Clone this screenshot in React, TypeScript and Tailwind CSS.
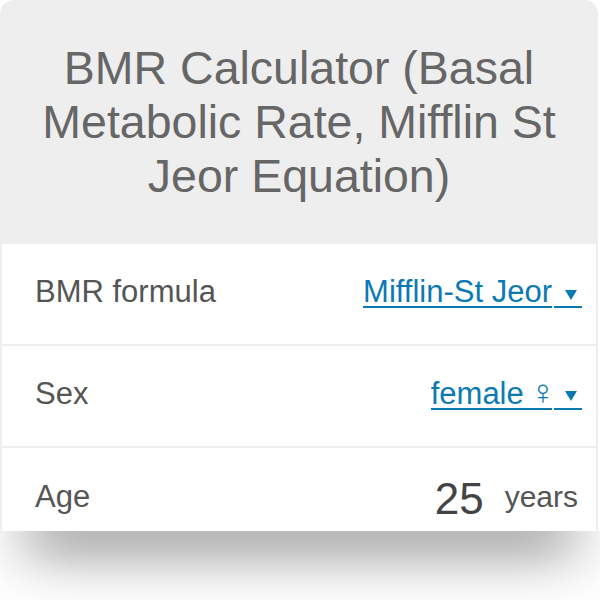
import React from "react";

function Arrow() {
  return (
    <svg width="12" height="10" viewBox="0 0 12 10" className="block">
      <polygon points="0,0 12,0 6,10" fill="#0b7ab4" />
    </svg>
  );
}

function SelectLink({ children }: { children: React.ReactNode }) {
  return (
    <div className="flex text-[#0b7ab4]">
      <span className="border-b-2 border-[#0b7ab4] leading-[28px] whitespace-nowrap flex items-baseline">{children}</span>
      <span className="ml-[2px] border-b-2 border-[#0b7ab4] flex items-center pl-[11px] pr-[5px] pt-[5px]">
        <Arrow />
      </span>
    </div>
  );
}

export default function App() {
  return (
    <div className="w-[600px] h-[600px] bg-white font-['Liberation_Sans',Arial,sans-serif] overflow-hidden">
      <div className="w-[598px] h-[531px] overflow-hidden rounded-t-[14px] bg-[#eeeeee] flex flex-col">
        <div className="h-[244px] shrink-0 flex items-center justify-center px-[30px]">
          <h1 className="text-center text-[46.5px] leading-[54px] text-[#666666] font-normal">
            BMR Calculator (Basal Metabolic Rate, Mifflin St Jeor Equation)
          </h1>
        </div>
        <div className="flex flex-col gap-[2px] px-[2px]">
          <div className="h-[100px] shrink-0 bg-white flex items-baseline justify-between pt-[30px] pl-[33px] pr-[14px] text-[31px]">
            <span className="leading-[36px] text-[#555555]">BMR formula</span>
            <SelectLink>
              <span>Mifflin-St Jeor</span>
            </SelectLink>
          </div>
          <div className="h-[100px] shrink-0 bg-white flex items-baseline justify-between pt-[30px] pl-[33px] pr-[14px] text-[31px]">
            <span className="leading-[36px] text-[#555555]">Sex</span>
            <SelectLink>
              <span>female</span>
              <span className="text-[35px] leading-[28px] ml-[6px] -mr-[4px]">♀</span>
            </SelectLink>
          </div>
          <div className="h-[100px] shrink-0 bg-white flex items-center justify-between pb-[3px] pl-[33px] pr-[18px]">
            <span className="text-[31px] leading-[36px] text-[#555555]">Age</span>
            <div className="flex items-center gap-[21px]">
              <span className="text-[44px] leading-[44px] pt-[5px] text-[#444444]">25</span>
              <span className="text-[30px] leading-[36px] text-[#555555]">years</span>
            </div>
          </div>
        </div>
      </div>
      <div className="h-[69px] overflow-hidden">
        <div className="mx-[25px] -mt-[40px] h-[40px] bg-white shadow-[0_18px_60px_rgba(0,0,0,0.55)]" />
      </div>
    </div>
  );
}
